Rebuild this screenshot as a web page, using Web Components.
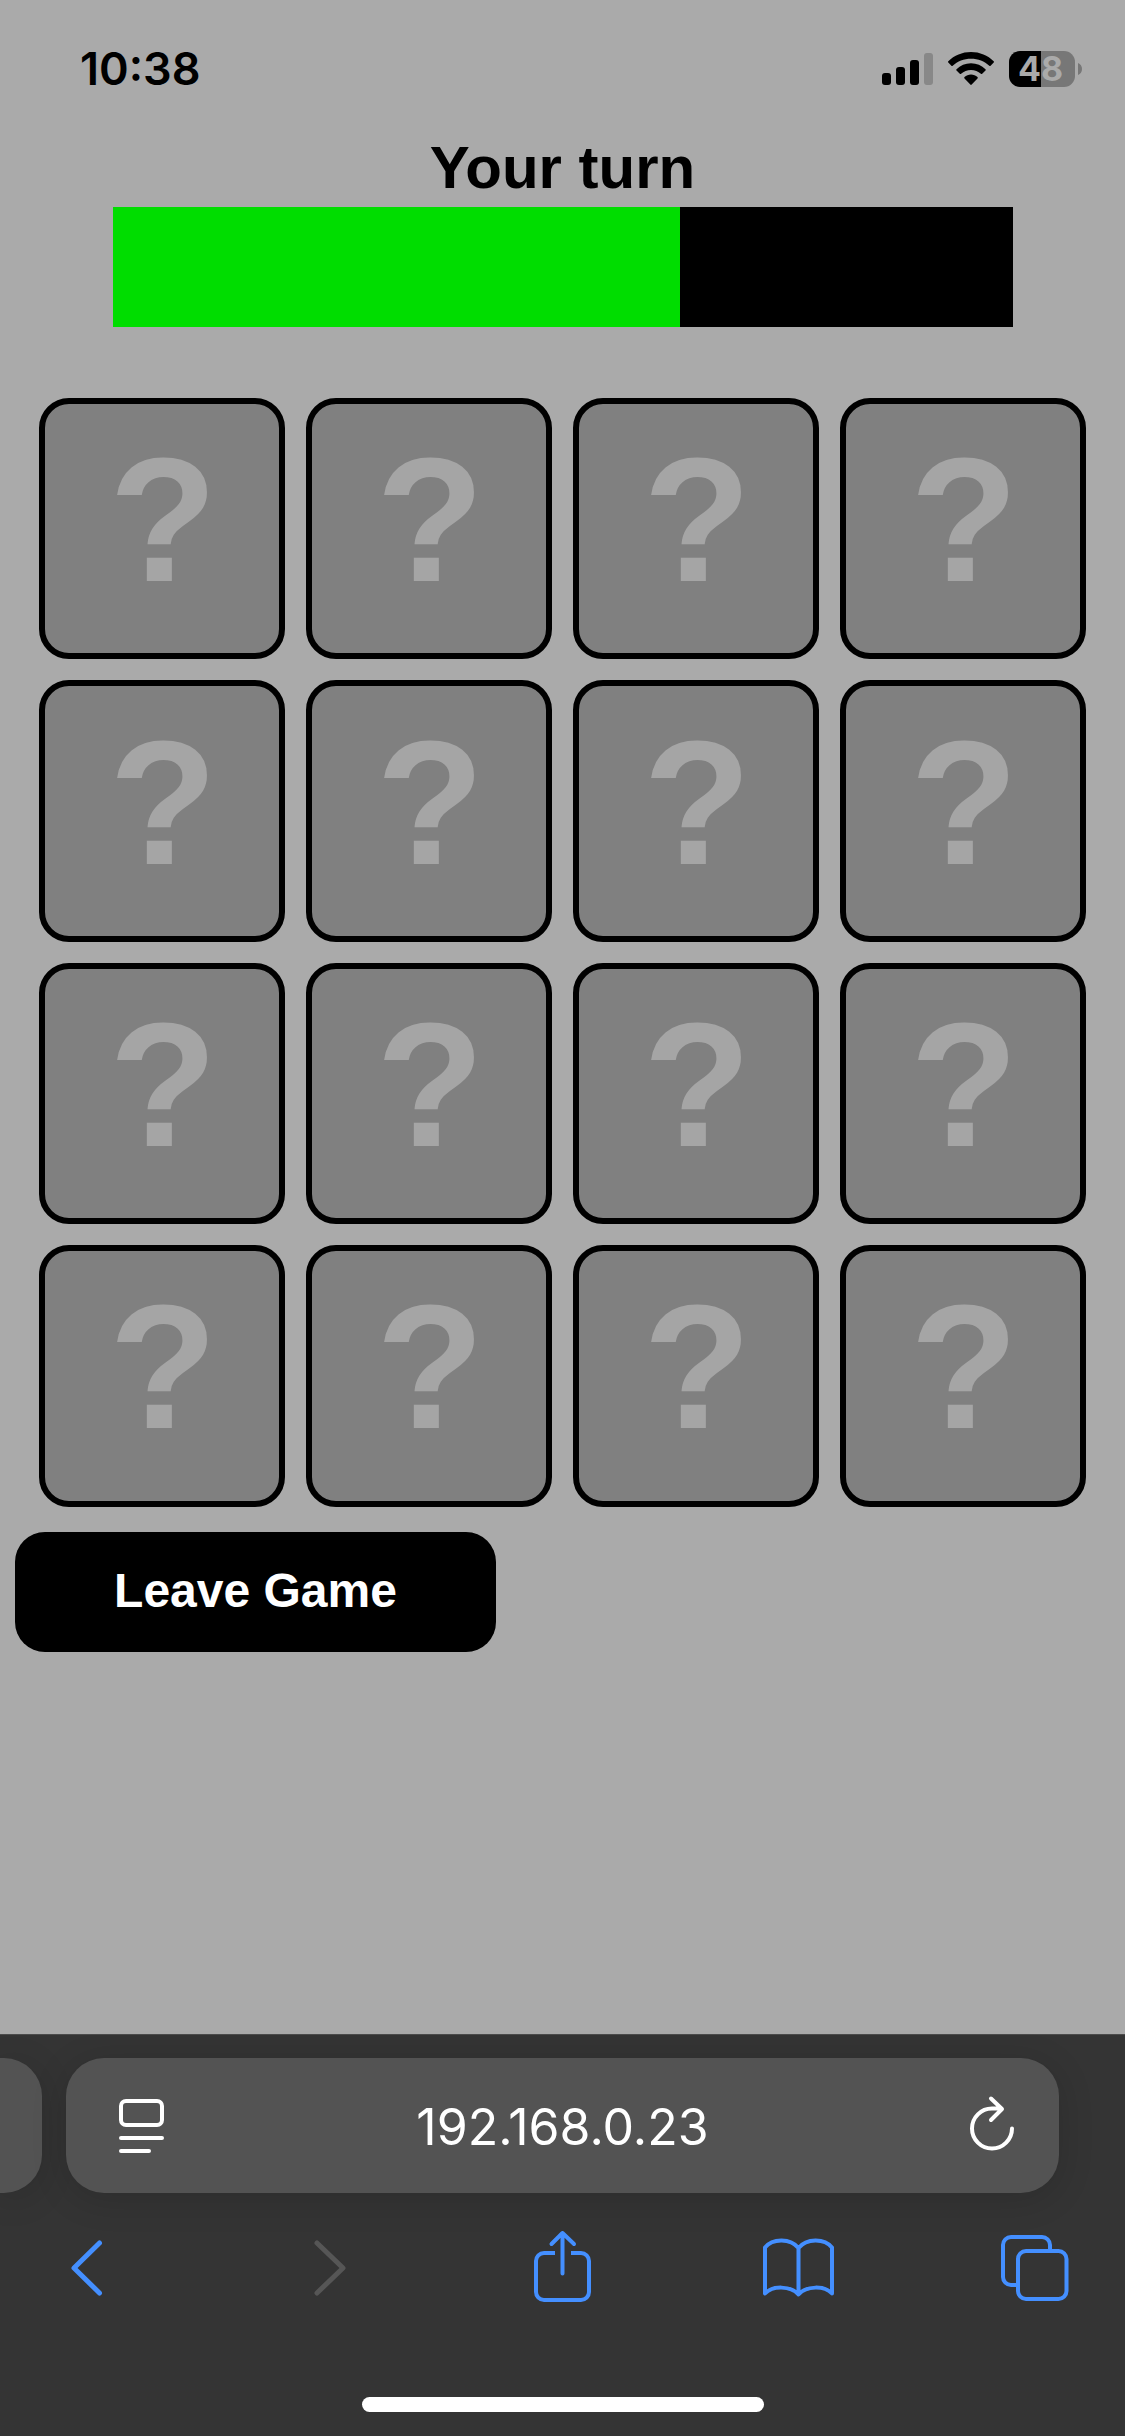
<!DOCTYPE html>
<html lang="en">
<head>
<meta charset="utf-8">
<meta name="viewport" content="width=device-width, initial-scale=1">
<title>Memory Game</title>
<style>
  html, body { margin: 0; background: #aaaaaa; }
  body { font-family: "Liberation Sans", Arial, sans-serif; color: #000; }
</style>
</head>
<body>
<phone-screen>
  <status-bar slot="status" time="10:38" battery="48"></status-bar>
  <turn-timer value="63">Your turn</turn-timer>
  <card-board count="16"></card-board>
  <game-button>Leave Game</game-button>
  <browser-bar slot="browser" address="192.168.0.23"></browser-bar>
</phone-screen>

<script>
class BaseElement extends HTMLElement {
  connectedCallback() {
    if (this.shadowRoot) return;
    this.attachShadow({ mode: "open" }).innerHTML =
      `<style>*{box-sizing:border-box} button{font:inherit;color:inherit;border:0;margin:0;padding:0;background:none;cursor:pointer} svg{display:block}</style>` + this.render();
  }
}

customElements.define("phone-screen", class extends BaseElement {
  render() {
    return `
    <style>
      :host { display: flex; flex-direction: column; min-height: 100vh; }
      main { flex: 1; display: flex; flex-direction: column; align-items: stretch; }
    </style>
    <slot name="status"></slot>
    <main><slot></slot></main>
    <slot name="browser"></slot>`;
  }
});

customElements.define("status-bar", class extends BaseElement {
  render() {
    const level = this.getAttribute("battery");
    return `
    <style>
      :host { display: flex; justify-content: space-between; align-items: center;
              height: 132px; padding: 6px 43px 0 80px; box-sizing: border-box;
              font-family: Inter, sans-serif; }
      time { font-size: 45px; line-height: 56px; font-weight: 600; }
      .icons { display: flex; align-items: center; gap: 15px; }
      .battery { display: flex; align-items: center; gap: 3px; }
      .cell { width: 66px; height: 36px; padding-right: 3px; border-radius: 11px; display: grid; place-items: center;
              background: linear-gradient(90deg, #000 ${level}%, #777 ${level}%);
              color: #aaa; font-size: 34px; line-height: 36px; font-weight: 700; }
    </style>
    <time>${this.getAttribute("time")}</time>
    <div class="icons">
      <svg width="51" height="34" viewBox="0 0 51 34" aria-label="Signal">
        <rect x="0" y="21" width="9" height="12" rx="3"/>
        <rect x="14" y="15" width="9" height="18" rx="3"/>
        <rect x="28" y="8" width="9" height="25" rx="3"/>
        <rect x="42" y="1" width="9" height="32" rx="3" fill="#888"/>
      </svg>
      <svg width="46" height="34" viewBox="0 0 46 34" aria-label="Wi-Fi">
        <path d="M23 0C14.200 0 6.200 3.400.3 9.300a1 1 0 0 0 0 1.300l3.100 3.200a1 1 0 0 0 1.300 0C9.500 9.200 15.900 6.700 23 6.700s13.500 2.500 18.300 7.100a1 1 0 0 0 1.300 0l3.100-3.200a1 1 0 0 0 0-1.300C39.800 3.400 31.800 0 23 0z"/>
        <path d="M23 11.300c-5.600 0-10.700 2.200-14.500 5.900a1 1 0 0 0 0 1.400l3.300 3.200a1 1 0 0 0 1.300 0c2.700-2.400 6.100-3.900 9.900-3.900s7.200 1.500 9.900 3.900a1 1 0 0 0 1.300 0l3.300-3.200a1 1 0 0 0 0-1.400c-3.800-3.700-8.900-5.900-14.500-5.900z"/>
        <path d="M23 22.600c-2.500 0-4.700.9-6.500 2.400a1 1 0 0 0 0 1.400l5.800 6.200a1 1 0 0 0 1.400 0l5.800-6.200a1 1 0 0 0 0-1.400c-1.800-1.500-4-2.400-6.500-2.400z"/>
      </svg>
      <div class="battery">
        <span class="cell">${level}</span>
        <svg width="4" height="12" viewBox="0 0 4 12"><path d="M0 0c2.500 1 4 3.300 4 6s-1.500 5-4 6z" fill="#777"/></svg>
      </div>
    </div>`;
  }
});

customElements.define("turn-timer", class extends BaseElement {
  render() {
    return `
    <style>
      :host { display: block; }
      h1 { margin: 0; padding-bottom: 3px; text-align: center; font-size: 60px; line-height: 72px; font-weight: 700; }
      .track { width: 80%; height: 120px; margin: 0 auto; background: #000; }
      .fill { width: ${this.getAttribute("value")}%; height: 100%; background: #00dd00; }
    </style>
    <h1><slot></slot></h1>
    <div class="track" role="progressbar" aria-label="Time left" aria-valuenow="${this.getAttribute("value")}"><div class="fill"></div></div>`;
  }
});

customElements.define("memory-card", class extends BaseElement {
  render() {
    return `
    <style>
      :host { display: block; aspect-ratio: 16 / 17; }
      button { display: flex; align-items: center; justify-content: center;
               width: 100%; height: 100%; padding: 0 0 16px 2px;
               border: 6px solid #000; border-radius: 30px; background: #808080;
               color: #a5a5a5; font-size: 177px; line-height: 207px; font-weight: 700; }
    </style>
    <button type="button">?</button>`;
  }
});

customElements.define("card-board", class extends BaseElement {
  render() {
    const cards = "<memory-card></memory-card>".repeat(Number(this.getAttribute("count")));
    return `
    <style>
      :host { display: grid; grid-template-columns: repeat(4, 1fr); gap: 21px; margin: 71px 39px 25px; }
    </style>${cards}`;
  }
});

customElements.define("game-button", class extends BaseElement {
  render() {
    return `
    <style>
      :host { display: flex; padding: 0 15px; }
      button { min-width: 481px; height: 120px; padding-bottom: 2px; border-radius: 30px; background: #000; color: #fff;
               font-size: 48px; line-height: 56px; font-weight: 700; }
    </style>
    <button type="button"><slot></slot></button>`;
  }
});

customElements.define("browser-bar", class extends BaseElement {
  render() {
    return `
    <style>
      :host { display: block; background: #343434; border-top: 1px solid #4c4c4c;
              font-family: Inter, sans-serif; color: #fff; }
      .tabs { display: flex; gap: 24px; padding: 23px 66px 0 0; }
      .pill { height: 135px; background: #535353; box-shadow: 0 6px 36px rgba(0,0,0,.14); }
      .previous { width: 42px; border-radius: 0 38px 38px 0; }
      .current { flex: 1; min-width: 0; display: flex; align-items: center;
                 justify-content: space-between; padding: 0 37px; border-radius: 38px; }
      input { flex: 1; min-width: 0; border: 0; padding: 2px 0 0; background: none; outline: 0;
              color: inherit; text-align: center; font: 400 50px/60px Inter, sans-serif; }
      nav { display: flex; justify-content: space-between; padding: 35px 50px 0; color: #448fff; }
      button:disabled { color: #565656; }
      svg { fill: none; stroke: currentColor; stroke-linecap: round; stroke-linejoin: round; stroke-width: 4; }
      .chevron { stroke-width: 5; }
      .open { stroke-linecap: butt; }
      .home { width: 402px; height: 15px; margin: 89px auto 24px; border-radius: 8px; background: #fff; }
    </style>
    <div class="tabs">
      <div class="pill previous"></div>
      <div class="pill current">
        <button type="button" aria-label="Page menu">
          <svg width="76" height="76" viewBox="0 0 76 76">
            <rect x="18" y="13" width="41" height="24" rx="5"/>
            <path d="M18 50H59M18 63H46"/>
          </svg>
        </button>
        <input type="text" aria-label="Address" value="${this.getAttribute("address")}">
        <button type="button" aria-label="Reload">
          <svg width="76" height="76" viewBox="0 0 76 76">
            <path d="M66 40.500A20 20 0 1 1 46 20.500H55M45 10.500 56 21 45 32"/>
          </svg>
        </button>
      </div>
    </div>
    <nav>
      <button type="button" aria-label="Back"><svg class="chevron" width="80" height="80" viewBox="0 0 80 80"><path d="M49.500 15 24 40 49.500 65"/></svg></button>
      <button type="button" aria-label="Forward" disabled><svg class="chevron" width="80" height="80" viewBox="0 0 80 80"><path d="M31 15 57 40 31 65"/></svg></button>
      <button type="button" aria-label="Share"><svg width="80" height="80" viewBox="0 0 80 80">
        <path class="open" d="M32 25H21a8 8 0 0 0-8 8V64a8 8 0 0 0 8 8H58a8 8 0 0 0 8-8V33a8 8 0 0 0-8-8H48"/>
        <path d="M39.500 45.500V5M28.500 16 39.500 5 51 16"/></svg></button>
      <button type="button" aria-label="Bookmarks"><svg width="80" height="80" viewBox="0 0 80 80">
        <path d="M6 19.500C13.500 10 31.500 10 39.500 20C47.500 10 65.500 10 73 19.500V65.500C65.500 57.500 47.500 57.500 39.500 66.500C31.500 57.500 13.500 57.500 6 65.500ZM39.500 20V66"/></svg></button>
      <button type="button" aria-label="Tabs"><svg width="80" height="80" viewBox="0 0 80 80">
        <rect x="23" y="23" width="48.500" height="48" rx="8"/>
        <path class="open" d="M55 22V17a8 8 0 0 0-8-8H16a8 8 0 0 0-8 8V49a8 8 0 0 0 8 8H23"/></svg></button>
    </nav>
    <div class="home"></div>`;
  }
});
</script>
</body>
</html>
